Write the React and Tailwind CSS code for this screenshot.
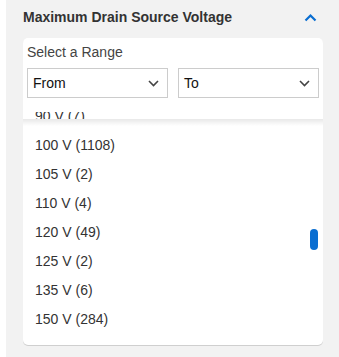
import React from "react";

const options = [
  "100 V (1108)",
  "105 V (2)",
  "110 V (4)",
  "120 V (49)",
  "125 V (2)",
  "135 V (6)",
  "150 V (284)",
];

function ChevronDown() {
  return (
    <svg width="11" height="7" viewBox="0 0 11 7" fill="none">
      <polyline points="1,1 5.5,5.5 10,1" stroke="#444" strokeWidth="1.6" />
    </svg>
  );
}

function RangeSelect({ label }) {
  return (
    <div className="flex-1 h-[30px] flex items-center justify-between border border-[#cccccc] bg-white pl-[5px] pr-[8px]">
      <span className="text-[14px] text-[#111]">{label}</span>
      <ChevronDown />
    </div>
  );
}

export default function App() {
  return (
    <div className="min-h-screen bg-white pl-[6px] font-['Liberation_Sans',Arial,sans-serif]">
      <div className="min-h-screen bg-[#f2f2f2] pl-[17px] pr-[16px]">
        <div className="h-[34px] mb-[4px] flex items-center justify-between">
          <span className="text-[14px] font-bold text-[#333]">
            Maximum Drain Source Voltage
          </span>
          <svg width="13" height="9" viewBox="0 0 13 9" fill="none" className="mr-[6px]">
            <polyline points="1.5,7.5 6.5,2.5 11.5,7.5" stroke="#0a6ed1" strokeWidth="2.2" />
          </svg>
        </div>

        <div className="bg-white rounded-[5px] shadow-[0_1px_0_#cfcfcf]">
          <div className="px-[4px] pt-[4px]">
            <div className="h-[20px] leading-[20px] text-[14px] text-[#444]">
              Select a Range
            </div>
            <div className="mt-[6px] flex gap-[10px]">
              <RangeSelect label="From" />
              <RangeSelect label="To" />
            </div>
          </div>

          <div className="h-[14px]" />
          <div className="h-[7px] overflow-hidden">
            <div className="mt-[-10.5px] h-[29px] leading-[29px] px-[12px] text-[14px] text-[#333]">
              90 V (7)
            </div>
          </div>

          <div className="relative pt-[12px] pb-[11px]">
            <div className="absolute top-0 left-0 right-0 h-[7px] bg-gradient-to-b from-black/[0.09] to-transparent" />
            {options.map((o) => (
              <div key={o} className="h-[29px] leading-[29px] px-[12px] text-[14px] text-[#333]">
                {o}
              </div>
            ))}
            <div className="absolute top-[110px] right-[5px] w-[8px] h-[21px] rounded-full bg-[#0a6ed1]" />
          </div>
        </div>
      </div>
    </div>
  );
}
